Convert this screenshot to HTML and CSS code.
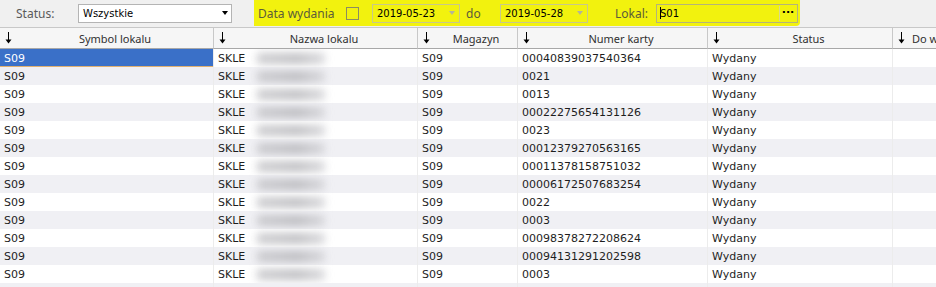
FILE: index.html
```html
<!DOCTYPE html>
<html lang="pl">
<head>
    <meta charset="UTF-8">
    <meta name="viewport" content="width=device-width, initial-scale=1.0">
    <title>Karty</title>
    <link rel="stylesheet" href="styles.css">
</head>
<body>
    <!-- Pasek filtrów -->
    <div class="filters">
        <span class="label lbl-status">Status:</span>
        <div class="combo">
            <span>Wszystkie</span>
            <span class="tri"></span>
        </div>

        <!-- Zaznaczony obszar -->
        <div class="highlight">
            <span class="label lbl-data">Data wydania</span>
            <span class="check"></span>
            <div class="date">
                <span>2019-05-23</span>
                <span class="tri tri-off"></span>
            </div>
            <span class="label lbl-do">do</span>
            <div class="date">
                <span>2019-05-28</span>
                <span class="tri tri-off"></span>
            </div>
            <span class="label lbl-lokal">Lokal:</span>
            <div class="lookup">
                <span class="caret"></span><span>S01</span>
                <span class="dots">&middot;&middot;&middot;</span>
            </div>
        </div>
    </div>

    <!-- Siatka -->
    <div class="grid">
        <table>
            <colgroup>
                <col style="width: 214px">
                <col style="width: 204px">
                <col style="width: 100px">
                <col style="width: 190px">
                <col style="width: 185px">
                <col style="width: 120px">
            </colgroup>
            <thead>
                <tr>
                    <th><div class="head"><svg class="arrow" width="7" height="12" viewBox="0 0 7 12"><path d="M3.5 0V9" stroke="#000" stroke-width="1"/><path d="M0.5 7.5H6.5L3.5 11.5Z" fill="#000"/></svg><span>Symbol lokalu</span></div></th>
                    <th><div class="head"><svg class="arrow" width="7" height="12" viewBox="0 0 7 12"><path d="M3.5 0V9" stroke="#000" stroke-width="1"/><path d="M0.5 7.5H6.5L3.5 11.5Z" fill="#000"/></svg><span>Nazwa lokalu</span></div></th>
                    <th><div class="head"><svg class="arrow" width="7" height="12" viewBox="0 0 7 12"><path d="M3.5 0V9" stroke="#000" stroke-width="1"/><path d="M0.5 7.5H6.5L3.5 11.5Z" fill="#000"/></svg><span>Magazyn</span></div></th>
                    <th><div class="head"><svg class="arrow" width="7" height="12" viewBox="0 0 7 12"><path d="M3.5 0V9" stroke="#000" stroke-width="1"/><path d="M0.5 7.5H6.5L3.5 11.5Z" fill="#000"/></svg><span>Numer karty</span></div></th>
                    <th><div class="head"><svg class="arrow" width="7" height="12" viewBox="0 0 7 12"><path d="M3.5 0V9" stroke="#000" stroke-width="1"/><path d="M0.5 7.5H6.5L3.5 11.5Z" fill="#000"/></svg><span>Status</span></div></th>
                    <th><div class="head head-left"><svg class="arrow" width="7" height="12" viewBox="0 0 7 12"><path d="M3.5 0V9" stroke="#000" stroke-width="1"/><path d="M0.5 7.5H6.5L3.5 11.5Z" fill="#000"/></svg><span>Do wydania</span></div></th>
                </tr>
            </thead>
            <tbody>
                <tr><td class="selected">S09</td><td>SKLE<span class="blur"></span></td><td>S09</td><td>00040839037540364</td><td>Wydany</td><td></td></tr>
                <tr><td>S09</td><td>SKLE<span class="blur"></span></td><td>S09</td><td>0021</td><td>Wydany</td><td></td></tr>
                <tr><td>S09</td><td>SKLE<span class="blur"></span></td><td>S09</td><td>0013</td><td>Wydany</td><td></td></tr>
                <tr><td>S09</td><td>SKLE<span class="blur"></span></td><td>S09</td><td>00022275654131126</td><td>Wydany</td><td></td></tr>
                <tr><td>S09</td><td>SKLE<span class="blur"></span></td><td>S09</td><td>0023</td><td>Wydany</td><td></td></tr>
                <tr><td>S09</td><td>SKLE<span class="blur"></span></td><td>S09</td><td>00012379270563165</td><td>Wydany</td><td></td></tr>
                <tr><td>S09</td><td>SKLE<span class="blur"></span></td><td>S09</td><td>00011378158751032</td><td>Wydany</td><td></td></tr>
                <tr><td>S09</td><td>SKLE<span class="blur"></span></td><td>S09</td><td>00006172507683254</td><td>Wydany</td><td></td></tr>
                <tr><td>S09</td><td>SKLE<span class="blur"></span></td><td>S09</td><td>0022</td><td>Wydany</td><td></td></tr>
                <tr><td>S09</td><td>SKLE<span class="blur"></span></td><td>S09</td><td>0003</td><td>Wydany</td><td></td></tr>
                <tr><td>S09</td><td>SKLE<span class="blur"></span></td><td>S09</td><td>00098378272208624</td><td>Wydany</td><td></td></tr>
                <tr><td>S09</td><td>SKLE<span class="blur"></span></td><td>S09</td><td>00094131291202598</td><td>Wydany</td><td></td></tr>
                <tr><td>S09</td><td>SKLE<span class="blur"></span></td><td>S09</td><td>0003</td><td>Wydany</td><td></td></tr>
                <tr><td></td><td></td><td></td><td></td><td></td><td></td></tr>
            </tbody>
        </table>
    </div>
</body>
</html>
```

FILE: styles.css
```css
body {
    margin: 0;
    background-color: #f0f0f0;
    font-family: "DejaVu Sans", sans-serif;
    height: 287px;
    overflow: hidden;
}

/* === Pasek filtrów === */
.filters {
    display: flex;
    align-items: center;
    height: 26px;
}

.label {
    font-family: "Noto Sans", sans-serif;
    font-size: 12px;
    color: #5a5a5a;
    white-space: nowrap;
}

.lbl-status {
    width: 62px;
    padding-left: 16px;
}

.combo,
.date,
.lookup {
    display: flex;
    align-items: center;
    box-sizing: border-box;
    height: 19px;
    font-size: 10px;
    color: #000;
    padding-left: 4px;
}

.combo {
    width: 154px;
    background-color: #fff;
    border: 1px solid #b4b4b4;
}

.combo span:first-child,
.date span:first-child {
    flex: 1;
}

.tri {
    width: 0;
    height: 0;
    border-left: 3.5px solid transparent;
    border-right: 3.5px solid transparent;
    border-top: 4px solid #000;
    margin-right: 3px;
}

.tri-off {
    border-top-color: #b4b49a;
    margin-right: 4px;
}

.highlight {
    display: flex;
    align-items: center;
    align-self: stretch;
    width: 546px;
    box-sizing: border-box;
    margin-left: 22px;
    padding-left: 4px;
    background-color: #f2f20e;
    border-bottom-right-radius: 4px;
}

.highlight .label {
    color: #5c5c3a;
}

.lbl-data {
    width: 88px;
}

.check {
    width: 13px;
    height: 13px;
    box-sizing: border-box;
    border: 1px solid #8c8c60;
}

.date {
    width: 88px;
    margin-left: 13px;
    border: 1px solid #c8c88a;
}

.lbl-do {
    width: 21px;
    margin-left: 6px;
}

.lbl-lokal {
    width: 41px;
    margin-left: 27px;
}

.lookup {
    position: relative;
    width: 142px;
    border: 1px solid #b4b47a;
    padding-left: 3px;
}

.caret {
    width: 1px;
    height: 12px;
    background-color: #000;
    margin-right: -1px;
}

.dots {
    position: absolute;
    right: 1px;
    top: 1px;
    bottom: 1px;
    width: 16px;
    border-left: 1px solid #d8d890;
    text-align: center;
    font-weight: bold;
    font-size: 11px;
    line-height: 14px;
}

/* === Siatka === */
.grid {
    margin-top: 1px;
    border-top: 1px solid #c8c8c8;
}

table {
    table-layout: fixed;
    border-spacing: 0;
    width: 1013px;
}

th {
    height: 20px;
    padding: 0;
    background-color: #f6f6f6;
    border-bottom: 1px solid #a8a8a8;
    border-right: 1px solid #c8c8c8;
    font-family: "Noto Sans", sans-serif;
    font-weight: normal;
    font-size: 11px;
    color: #303030;
    overflow: hidden;
}

.head {
    display: flex;
    align-items: center;
    padding-left: 5px;
}

.head span {
    flex: 1;
    margin-left: 5px;
    text-align: center;
    white-space: nowrap;
}

.head-left span {
    text-align: left;
    padding-left: 2px;
}

td {
    height: 18px;
    padding: 0 0 0 4px;
    font-size: 11px;
    color: #1e1e1e;
    background-color: #fff;
    border-right: 1px solid #ececec;
    white-space: nowrap;
    overflow: hidden;
    box-sizing: border-box;
}

tbody tr:nth-child(even) td {
    background-color: #f0f0f4;
}

td.selected {
    background-color: #3a70c8;
    color: #fff;
    box-shadow: inset 0 -1px 0 #e0b070;
}

.blur {
    display: inline-block;
    width: 68px;
    height: 11px;
    margin-left: 12px;
    vertical-align: middle;
    background: linear-gradient(to right, #c4c4c8, #b4b4b8 60%, #d4d4d8);
    filter: blur(4px);
    opacity: 0.85;
}
```
